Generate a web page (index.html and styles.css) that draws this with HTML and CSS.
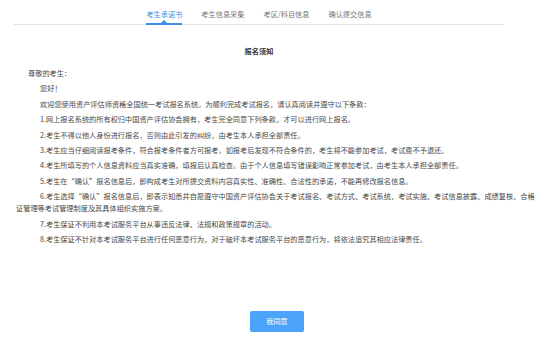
FILE: index.html
```html
<!DOCTYPE html>
<html lang="zh-CN">
<head>
    <meta charset="UTF-8">
    <meta name="viewport" content="width=device-width, initial-scale=1.0">
    <title>考生承诺书</title>
    <link rel="stylesheet" href="styles.css">
</head>
<body>
    <div class="steps">
        <div class="step active">考生承诺书</div>
        <div class="step">考生信息采集</div>
        <div class="step">考区/科目信息</div>
        <div class="step">确认提交信息</div>
    </div>

    <h2 class="notice-title">报名须知</h2>

    <div class="notice">
        <p class="greet">尊敬的考生：</p>
        <p>您好！</p>
        <p>欢迎您使用资产评估师资格全国统一考试报名系统。为顺利完成考试报名，请认真阅读并遵守以下条款：</p>
        <p>1.网上报名系统的所有权归中国资产评估协会拥有，考生完全同意下列条款，才可以进行网上报名。</p>
        <p>2.考生不得以他人身份进行报名，否则由此引发的纠纷，由考生本人承担全部责任。</p>
        <p>3.考生应当仔细阅读报考条件，符合报考条件者方可报考。如报考后发现不符合条件的，考生将不能参加考试，考试费不予退还。</p>
        <p>4.考生所填写的个人信息资料应当真实准确，填报后认真检查。由于个人信息填写错误影响正常参加考试，由考生本人承担全部责任。</p>
        <p>5.考生在“确认”报名信息后，即构成考生对所提交资料内容真实性、准确性、合法性的承诺，不能再修改报名信息。</p>
        <p>6.考生选择“确认”报名信息后，即表示知悉并自愿遵守中国资产评估协会关于考试报名、考试方式、考试系统、考试实施、考试信息披露、成绩复核、合格证管理等考试管理制度及其具体组织实施方案。</p>
        <p>7.考生保证不利用本考试服务平台从事违反法律、法规和政策规章的活动。</p>
        <p>8.考生保证不针对本考试服务平台进行任何恶意行为，对于破坏本考试服务平台的恶意行为，将依法追究其相应法律责任。</p>
    </div>

    <div class="actions">
        <button class="agree">我同意</button>
    </div>
</body>
</html>
```

FILE: styles.css
```css
body {
    font-family: "Noto Sans CJK SC", "Liberation Sans", sans-serif;
    font-size: 7.2px;
    margin: 0;
    background-color: #fff;
    color: #484848;
}
.steps {
    display: flex;
    justify-content: center;
    margin: 0 50px 0 14px;
    padding-top: 8px;
    border-bottom: 1px solid #e3e3e3;
}
.step {
    position: relative;
    margin: 0 9.5px;
    line-height: 12px;
    padding-bottom: 4px;
    color: #777;
}
.step.active {
    color: #3d8ee8;
    border-bottom: 2px solid #3d8ee8;
    padding-bottom: 2px;
    margin-bottom: -1px;
}
.step.active::after {
    content: "";
    position: absolute;
    left: 50%;
    bottom: 0;
    margin-left: -3px;
    border-left: 3px solid transparent;
    border-right: 3px solid transparent;
    border-bottom: 3px solid #3d8ee8;
}
.notice-title {
    margin: 20px 50px 0 14px;
    font-size: 7.2px;
    line-height: 12px;
    text-align: center;
    color: #333;
}
.notice {
    padding: 0 16px;
    margin-top: 10px;
}
.notice p {
    margin: 0 0 3.4px;
    line-height: 12px;
    text-indent: 24px;
}
.notice p.greet {
    text-indent: 12px;
}
.actions {
    display: flex;
    justify-content: center;
    margin-top: 66px;
}
.agree {
    width: 54px;
    height: 21px;
    padding: 0;
    border: none;
    border-radius: 2px;
    background-color: #4ba3fa;
    color: #fff;
    font-family: inherit;
    font-size: 7.2px;
    cursor: pointer;
}
```
